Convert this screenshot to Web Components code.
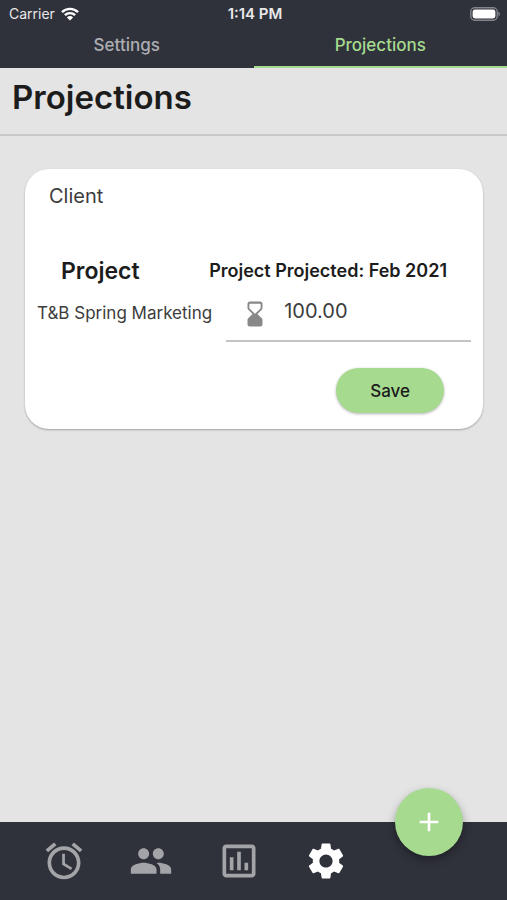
<!DOCTYPE html>
<html lang="en">
<head>
<meta charset="utf-8">
<meta name="viewport" content="width=device-width, initial-scale=1">
<title>Projections</title>
<style>
    body {
        margin: 0;
        font-family: Inter, "Liberation Sans", sans-serif;
        --dark: #30323b;
        --green: #a5da8f;
        --muted: #a3a4a8;
        --page: #e4e4e4;
        --ink: #1c1c1c;
    }
</style>
</head>
<body>
<projections-app></projections-app>

<script>
class StatusBar extends HTMLElement {
    constructor() {
        super();
        this.attachShadow({mode: 'open'});
        this.shadowRoot.innerHTML = `
            <style>
                :host {
                    display: grid;
                    grid-template-columns: 1fr auto 1fr;
                    align-items: center;
                    height: 27px;
                    padding: 0 6px 0 9px;
                    color: #e8e8ea;
                    font-size: 14px;
                }
                .carrier {
                    display: flex;
                    align-items: center;
                    gap: 6px;
                }
                .time { font-weight: 600; font-size: 15px; }
                .battery { justify-self: end; }
                svg { display: block; }
            </style>
            <span class="carrier">Carrier
                <svg width="18" height="14" viewBox="0 0 18 14" aria-hidden="true">
                    <g fill="none" stroke="#fff" stroke-width="2.4">
                        <path d="M1 5.2a11.4 11.4 0 0 1 16 0"/>
                        <path d="M3.9 8.2a7.2 7.2 0 0 1 10.2 0"/>
                    </g>
                    <path fill="#fff" d="M9 13.6 5.9 10.4a4.4 4.4 0 0 1 6.2 0z"/>
                </svg>
            </span>
            <span class="time">1:14 PM</span>
            <svg class="battery" width="31" height="14" viewBox="0 0 31 14" aria-hidden="true">
                <rect x=".8" y=".8" width="26.4" height="12.4" rx="4" fill="none" stroke="#83848a" stroke-width="1.4"/>
                <rect x="2.6" y="2.6" width="22.8" height="8.8" rx="2.4" fill="#fff"/>
                <path d="M28.4 4.6c2 .8 2 4 0 4.8z" fill="#83848a"/>
            </svg>
        `;
    }
}

customElements.define('status-bar', StatusBar);

class TabItem extends HTMLElement {
    constructor() {
        super();
        this.attachShadow({mode: 'open'});
        this.shadowRoot.innerHTML = `
            <style>
                :host { display: block; flex: 1; }
                button {
                    box-sizing: border-box;
                    width: 100%;
                    height: 41px;
                    padding: 0 0 4px;
                    border: 0;
                    border-bottom: 2px solid transparent;
                    background: none;
                    color: #adaeb2;
                    font: 500 17px/24px Inter, "Liberation Sans", sans-serif;
                    cursor: pointer;
                }
                :host([active]) button {
                    color: var(--green);
                    border-color: var(--green);
                }
            </style>
            <button type="button"><slot></slot></button>
        `;
    }
}

customElements.define('tab-item', TabItem);

class ProjectionCard extends HTMLElement {
    constructor() {
        super();
        this.attachShadow({mode: 'open'});
        const client = this.getAttribute('client') || '';
        const project = this.getAttribute('project') || '';
        const month = this.getAttribute('month') || '';
        const value = this.getAttribute('value') || '0.00';

        this.shadowRoot.innerHTML = `
            <style>
                :host {
                    display: block;
                    padding: 12px 12px 16px;
                    border-radius: 24px;
                    background: #fff;
                    box-shadow: 0 1px 2px rgba(0, 0, 0, .3);
                    color: var(--ink);
                }
                .client {
                    margin: 0 0 44px;
                    padding: 3px 12px;
                    font-size: 20px;
                    line-height: 24px;
                    color: #3c3c3c;
                }
                .heads, .row {
                    display: flex;
                    justify-content: space-between;
                }
                .heads {
                    align-items: center;
                    padding: 0 24px;
                }
                h2, label { margin: 0; font-weight: 600; line-height: 32px; }
                h2 { font-size: 23px; }
                label { font-size: 18px; }
                .row { gap: 14px; }
                .name {
                    padding-top: 14px;
                    font-size: 17px;
                    line-height: 24px;
                    color: #3c3c3c;
                    white-space: nowrap;
                }
                .field {
                    display: flex;
                    flex: 1;
                    align-items: center;
                    gap: 14px;
                    min-width: 0;
                    height: 53px;
                    padding-left: 14px;
                    border-bottom: 2px solid #c4c4c4;
                }
                .field svg { flex: none; }
                input {
                    flex: 1;
                    min-width: 0;
                    padding: 0 0 6px;
                    border: 0;
                    outline: 0;
                    background: none;
                    font: 20px/24px Inter, "Liberation Sans", sans-serif;
                    color: #3c3c3c;
                }
                .actions {
                    display: flex;
                    justify-content: flex-end;
                    padding: 26px 27px 0;
                }
                button {
                    height: 45px;
                    padding: 0 34px;
                    border: 0;
                    border-radius: 24px;
                    background: var(--green);
                    box-shadow: 0 1px 3px rgba(0, 0, 0, .3);
                    color: var(--ink);
                    font: 500 17px/24px Inter, "Liberation Sans", sans-serif;
                    cursor: pointer;
                }
            </style>
            <p class="client">${client}</p>
            <div class="heads">
                <h2>Project</h2>
                <label for="amount">Project Projected: ${month}</label>
            </div>
            <div class="row">
                <span class="name">${project}</span>
                <div class="field">
                    <svg width="30" height="30" viewBox="0 0 24 24" fill="#888" aria-hidden="true">
                        <path fill-rule="evenodd" d="M8 2h8a2 2 0 0 1 2 2v3.2a2 2 0 0 1-.6 1.4L14 12l3.4 3.4a2 2 0 0 1 .6 1.4V20a2 2 0 0 1-2 2H8a2 2 0 0 1-2-2v-3.2a2 2 0 0 1 .6-1.4L10 12 6.6 8.6A2 2 0 0 1 6 7.2V4a2 2 0 0 1 2-2zM8 3.7a.5.5 0 0 0-.5.5V7a1 1 0 0 0 .3.7L12 11.8l4.2-4.1a1 1 0 0 0 .3-.7V4.2a.5.5 0 0 0-.5-.5z"/>
                    </svg>
                    <input id="amount" type="text" inputmode="decimal" value="${value}">
                </div>
            </div>
            <div class="actions"><button type="button">Save</button></div>
        `;
    }
}

customElements.define('projection-card', ProjectionCard);

const NAV_ICONS = {
    alarm: 'M22 5.72l-4.6-3.86-1.29 1.53 4.6 3.86L22 5.72zM7.88 3.39L6.6 1.86 2 5.71l1.29 1.53 4.59-3.85zM12.5 8H11v6l4.75 2.85.75-1.23-4-2.37V8zM12 4c-4.97 0-9 4.03-9 9s4.02 9 9 9c4.97 0 9-4.03 9-9s-4.03-9-9-9zm0 16c-3.87 0-7-3.13-7-7s3.13-7 7-7 7 3.13 7 7-3.13 7-7 7z',
    people: 'M16 11c1.66 0 2.99-1.34 2.99-3S17.66 5 16 5s-3 1.34-3 3 1.34 3 3 3zm-8 0c1.66 0 2.99-1.34 2.99-3S9.66 5 8 5 5 6.34 5 8s1.34 3 3 3zm0 2c-2.33 0-7 1.17-7 3.5V19h14v-2.5c0-2.33-4.67-3.5-7-3.5zm8 0c-.29 0-.62.02-.97.05 1.16.84 1.97 1.97 1.97 3.45V19h6v-2.5c0-2.33-4.67-3.5-7-3.5z',
    chart: 'M9 17H7v-7h2v7zm4 0h-2V7h2v10zm4 0h-2v-4h2v4zm2 2H5V5h14v14zm0-16H5c-1.1 0-2 .9-2 2v14c0 1.1.9 2 2 2h14c1.1 0 2-.9 2-2V5c0-1.1-.9-2-2-2z',
    settings: 'M19.14 12.94c.04-.3.06-.61.06-.94 0-.32-.02-.64-.07-.94l2.03-1.58c.18-.14.23-.41.12-.61l-1.92-3.32c-.12-.22-.37-.29-.59-.22l-2.39.96c-.5-.38-1.03-.7-1.62-.94l-.36-2.54c-.04-.24-.24-.41-.48-.41h-3.84c-.24 0-.43.17-.47.41l-.36 2.54c-.59.24-1.13.57-1.62.94l-2.39-.96c-.22-.08-.47 0-.59.22L2.74 8.87c-.12.21-.08.47.12.61l2.03 1.58c-.05.3-.09.63-.09.94s.02.64.07.94l-2.03 1.58c-.18.14-.23.41-.12.61l1.92 3.32c.12.22.37.29.59.22l2.39-.96c.5.38 1.03.7 1.62.94l.36 2.54c.05.24.24.41.48.41h3.84c.24 0 .44-.17.47-.41l.36-2.54c.59-.24 1.13-.56 1.62-.94l2.39.96c.22.08.47 0 .59-.22l1.92-3.32c.12-.22.07-.47-.12-.61l-2.01-1.58zM12 15.6c-1.98 0-3.6-1.62-3.6-3.6s1.62-3.6 3.6-3.6 3.6 1.62 3.6 3.6-1.62 3.6-3.6 3.6z'
};

class NavItem extends HTMLElement {
    constructor() {
        super();
        this.attachShadow({mode: 'open'});
        const icon = this.getAttribute('icon');

        this.shadowRoot.innerHTML = `
            <style>
                :host { display: block; color: var(--muted); }
                :host([active]) { color: #fff; }
                a { display: block; color: inherit; }
                svg { display: block; }
            </style>
            <a href="#${icon}" aria-label="${icon}">
                <svg width="44" height="44" viewBox="0 0 24 24" fill="currentColor"><path d="${NAV_ICONS[icon]}"/></svg>
            </a>
        `;
    }
}

customElements.define('nav-item', NavItem);

class BottomNav extends HTMLElement {
    constructor() {
        super();
        this.attachShadow({mode: 'open'});
        this.shadowRoot.innerHTML = `
            <style>
                :host {
                    display: block;
                    position: relative;
                    background: var(--dark);
                }
                nav {
                    display: flex;
                    justify-content: space-around;
                    padding: 17px 27% 17px 4%;
                }
                .add {
                    position: absolute;
                    top: -34px;
                    right: 44px;
                    display: grid;
                    place-items: center;
                    width: 68px;
                    height: 68px;
                    padding: 0;
                    border: 0;
                    border-radius: 50%;
                    background: var(--green);
                    box-shadow: 0 4px 8px rgba(0, 0, 0, .35);
                    cursor: pointer;
                }
            </style>
            <nav><slot></slot></nav>
            <button class="add" type="button" aria-label="Add">
                <svg width="32" height="32" viewBox="0 0 24 24" fill="#fff"><path d="M19 13h-6v6h-2v-6H5v-2h6V5h2v6h6v2z"/></svg>
            </button>
        `;
    }
}

customElements.define('bottom-nav', BottomNav);

class ProjectionsApp extends HTMLElement {
    constructor() {
        super();
        this.attachShadow({mode: 'open'});
        this.shadowRoot.innerHTML = `
            <style>
                :host {
                    display: flex;
                    flex-direction: column;
                    min-height: 100vh;
                    background: var(--page);
                    color: var(--ink);
                }
                header { background: var(--dark); }
                .tabs { display: flex; }
                h1 {
                    margin: 0;
                    padding: 9px 12px 17px;
                    border-bottom: 2px solid #c8c8c8;
                    font-size: 33px;
                    font-weight: 600;
                    line-height: 40px;
                }
                main { flex: 1; }
                projection-card { margin: 33px 24px 0 25px; }
            </style>
            <header>
                <status-bar></status-bar>
                <div class="tabs">
                    <tab-item>Settings</tab-item>
                    <tab-item active>Projections</tab-item>
                </div>
            </header>
            <main>
                <h1>Projections</h1>
                <projection-card client="Client" project="T&amp;B Spring Marketing" month="Feb 2021" value="100.00"></projection-card>
            </main>
            <bottom-nav>
                <nav-item icon="alarm"></nav-item>
                <nav-item icon="people"></nav-item>
                <nav-item icon="chart"></nav-item>
                <nav-item icon="settings" active></nav-item>
            </bottom-nav>
        `;
    }
}

customElements.define('projections-app', ProjectionsApp);
</script>
</body>
</html>
